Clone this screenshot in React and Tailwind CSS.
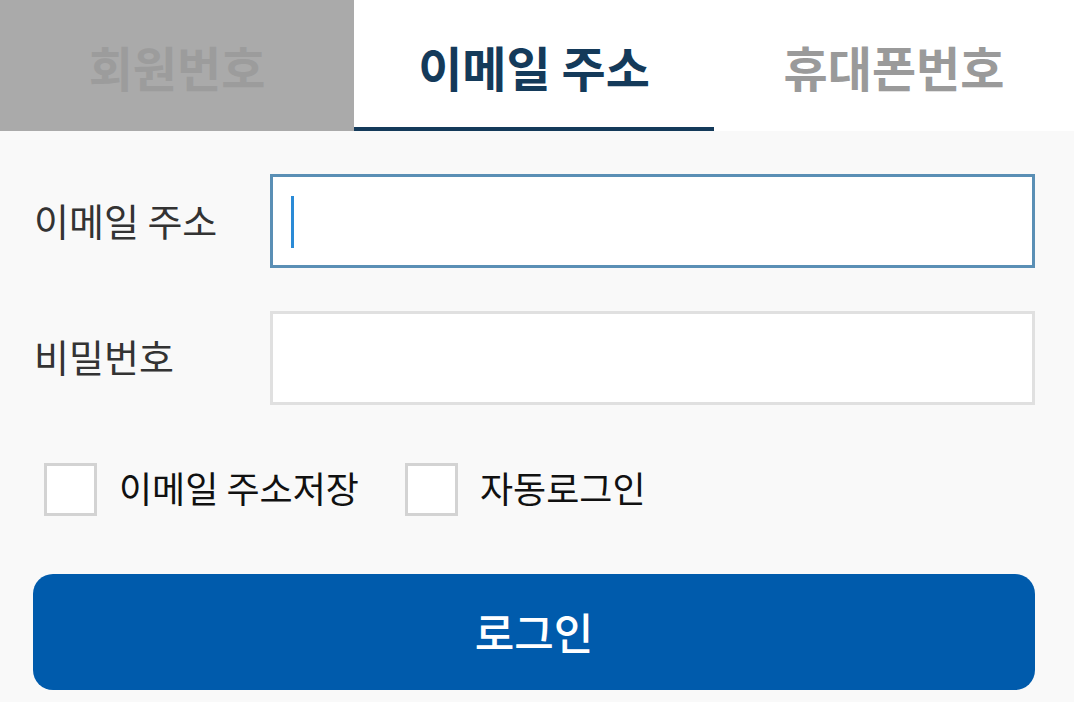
import { useState } from 'react'

const font = { fontFamily: '"Noto Sans CJK KR", "Noto Sans", sans-serif' }

function Tabs({ active, onChange }) {
  const tabs = ['회원번호', '이메일 주소', '휴대폰번호']
  return (
    <div className="flex h-[131px]">
      {tabs.map((t, i) => {
        if (i === 0) {
          return (
            <button
              key={t}
              onClick={() => onChange(i)}
              className="w-[354px] h-full bg-[#aaaaaa] text-[#9c9c9c] text-[48px] font-bold"
            >
              {t}
            </button>
          )
        }
        return (
          <button
            key={t}
            onClick={() => onChange(i)}
            className={
              i === active
                ? 'w-[360px] h-full bg-white text-[#143a5a] text-[48px] font-bold border-b-4 border-[#143a5a] pt-[4px]'
                : 'w-[360px] h-full bg-white text-[#9a9a9a] text-[48px] font-bold'
            }
          >
            {t}
          </button>
        )
      })}
    </div>
  )
}

export default function App() {
  const [tab, setTab] = useState(1)
  const [email, setEmail] = useState('')
  const [password, setPassword] = useState('')
  const [saveEmail, setSaveEmail] = useState(false)
  const [autoLogin, setAutoLogin] = useState(false)

  return (
    <div className="w-[1074px] h-[702px] bg-[#f9f9f9] overflow-hidden" style={font}>
      <Tabs active={tab} onChange={setTab} />

      <div className="pt-[43px] pl-[33px] pr-[39px]">
        {/* email row */}
        <div className="flex items-center">
          <label className="w-[237px] pl-[1px] text-[38px] text-[#333333] pb-[4px]">이메일 주소</label>
          <div className="relative flex-1 h-[94px] bg-white border-[3px] border-[#5a8fb5]">
            <input
              className="w-full h-full px-5 text-[32px] outline-none bg-transparent"
              value={email}
              onChange={(e) => setEmail(e.target.value)}
            />
            {!email && <span className="absolute left-[18px] top-[19px] w-[3px] h-[52px] bg-[#2a8ad6]"></span>}
          </div>
        </div>

        {/* password row */}
        <div className="flex items-center mt-[43px]">
          <label className="w-[237px] pl-[1px] text-[38px] text-[#333333] pb-[6px]">비밀번호</label>
          <input
            type="password"
            className="flex-1 h-[94px] bg-white border-[3px] border-[#e0e0e0] px-5 text-[32px] outline-none"
            value={password}
            onChange={(e) => setPassword(e.target.value)}
          />
        </div>

        {/* options */}
        <div className="flex items-center mt-[55px] pl-[11px]">
          <label className="flex items-center cursor-pointer">
            <span
              onClick={() => setSaveEmail(!saveEmail)}
              className="w-[53px] h-[53px] bg-white border-[3px] border-[#d3d3d3] flex items-center justify-center text-[#005bac] text-[32px]"
            >
              {saveEmail ? '✓' : ''}
            </span>
            <span className="ml-[22px] text-[36px] text-[#111111] pb-[4px]">이메일 주소저장</span>
          </label>
          <label className="flex items-center cursor-pointer ml-[46px]">
            <span
              onClick={() => setAutoLogin(!autoLogin)}
              className="w-[53px] h-[53px] bg-white border-[3px] border-[#d3d3d3] flex items-center justify-center text-[#005bac] text-[32px]"
            >
              {autoLogin ? '✓' : ''}
            </span>
            <span className="ml-[22px] text-[36px] text-[#111111] pb-[4px]">자동로그인</span>
          </label>
        </div>

        <button className="mt-[56px] w-[1002px] h-[116px] rounded-[20px] bg-[#005bac] text-white text-[43px] font-medium pb-[2px]">
          로그인
        </button>
      </div>
    </div>
  )
}
